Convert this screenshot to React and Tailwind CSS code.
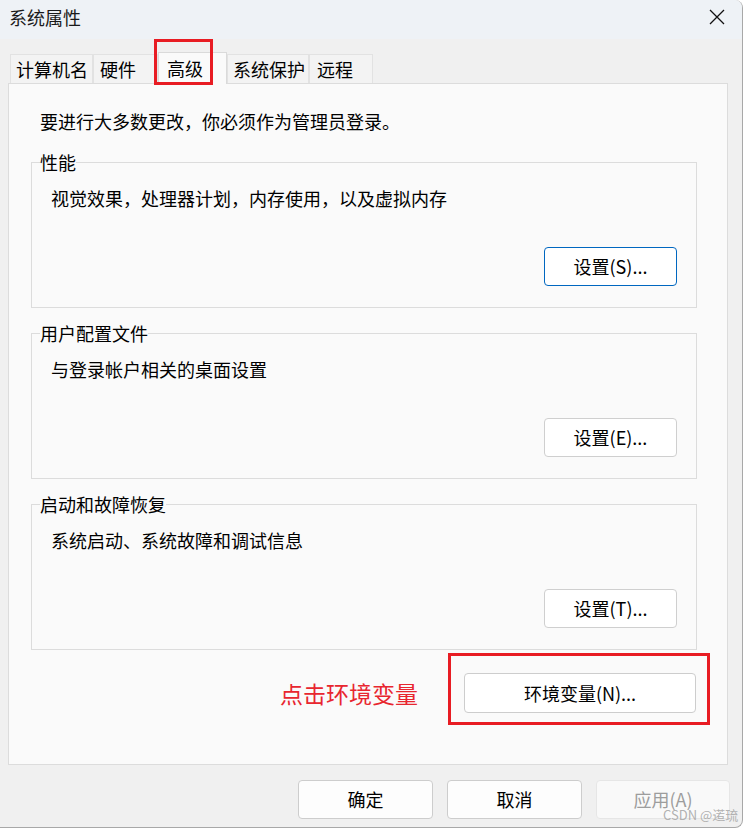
import React from "react";

const FONT = { fontFamily: '"Noto Sans CJK SC", "Noto Sans", sans-serif' };

function Group({ title, desc, btn, primary }) {
  return (
    <fieldset className="border border-[#dcdcdc] ml-[22px] mr-[30px] px-[8px] pb-[21px]">
      <legend className="px-0 text-[18px] leading-[24px] text-black">{title}</legend>
      <div className="pl-[11px] pt-[12px]">
        <div className="text-[18px] leading-[24px] text-black">{desc}</div>
        <div className="flex justify-end mt-[37px] pr-[11px]">
          <div
            className={
              "w-[133px] h-[39px] flex items-center justify-center rounded-[4px] bg-white text-[18px] text-black " +
              (primary ? "border border-[#0067c0]" : "border border-[#cfcfcf]")
            }
          >
            {btn}
          </div>
        </div>
      </div>
    </fieldset>
  );
}

function Tab({ label, w, selected, pl }) {
  if (selected) {
    return (
      <div
        className="h-[32px] -mb-[1px] bg-[#fafafa] border border-b-0 border-[#dadada] text-[18px] leading-[30px] text-black relative z-10"
        style={{ width: w, paddingLeft: pl }}
      >
        {label}
      </div>
    );
  }
  return (
    <div
      className="h-[29px] bg-[#f3f3f3] border border-b-0 border-[#e2e2e2] text-[18px] leading-[28px] text-black"
      style={{ width: w, paddingLeft: pl }}
    >
      {label}
    </div>
  );
}

export default function App() {
  return (
    <div className="w-[745px] h-[829px] bg-white overflow-hidden" style={FONT}>
      <div className="relative w-[743px] h-[828px] bg-[#f0f0f0] border-r border-b border-[#a8a8a8] rounded-tr-[8px] rounded-br-[8px] overflow-hidden flex flex-col">
        {/* title bar */}
        <div className="h-[39px] bg-[#eef2f6] flex items-start justify-between shrink-0">
          <div className="pl-[9px] pt-[5px] text-[18px] leading-[24px] text-[#1a1a1a]">系统属性</div>
          <svg className="mt-[9px] mr-[17px]" width="16" height="16" viewBox="0 0 16 16">
            <path d="M1 1 L15 15 M15 1 L1 15" stroke="#111" strokeWidth="1.3" fill="none" />
          </svg>
        </div>

        {/* tabs */}
        <div className="flex items-end pl-[10px] mt-[12px] h-[32px] shrink-0">
          <Tab label="计算机名" w={83} pl={5} />
          <Tab label="硬件" w={65} pl={6} />
          <Tab label="高级" selected w={69} pl={8} />
          <Tab label="系统保护" w={82} pl={5} />
          <Tab label="远程" w={64} pl={7} />
        </div>

        {/* panel */}
        <div className="ml-[8px] w-[720px] h-[682px] bg-[#fafafa] border border-[#dcdcdc] flex flex-col pt-[25px] shrink-0">
          <div className="pl-[31px] text-[18px] leading-[24px] text-black">
            要进行大多数更改，你必须作为管理员登录。
          </div>
          <div className="mt-[17px] flex flex-col gap-[13px]">
            <Group title="性能" desc="视觉效果，处理器计划，内存使用，以及虚拟内存" btn="设置(S)..." primary />
            <Group title="用户配置文件" desc="与登录帐户相关的桌面设置" btn="设置(E)..." />
            <Group title="启动和故障恢复" desc="系统启动、系统故障和调试信息" btn="设置(T)..." />
          </div>
          <div className="mt-[23px] flex items-center justify-end mr-[31px]">
            <div className="text-[23px] leading-[30px] text-[#e8262f] mr-[46px]">点击环境变量</div>
            <div className="w-[232px] h-[40px] flex items-center justify-center rounded-[4px] bg-white border border-[#cdcdcd] text-[18px] text-black">
              环境变量(N)...
            </div>
          </div>
        </div>

        {/* bottom buttons */}
        <div className="flex justify-end gap-[14px] mt-[15px] mr-[12px]">
          <div className="w-[135px] h-[39px] flex items-center justify-center rounded-[4px] bg-[#fdfdfd] border border-[#cdcdcd] text-[18px] text-black">
            确定
          </div>
          <div className="w-[135px] h-[39px] flex items-center justify-center rounded-[4px] bg-[#fdfdfd] border border-[#cdcdcd] text-[18px] text-black">
            取消
          </div>
          <div className="w-[134px] h-[39px] flex items-center justify-center rounded-[4px] bg-[#f9f9f9] border border-[#e6e6e6] text-[18px] text-[#9d9d9d]">
            应用(A)
          </div>
        </div>

        {/* annotations */}
        <div className="absolute left-[154px] top-[39px] w-[59px] h-[46px] border-[3px] border-[#e81c23] z-20" />
        <div className="absolute left-[448px] top-[653px] w-[262px] h-[72px] border-[3px] border-[#e81c23] z-20" />
        <div className="absolute left-[663px] top-[806px] text-[13px] leading-[18px] text-[#a8a8a8]/90 z-20">
          CSDN @逽琉
        </div>
      </div>
    </div>
  );
}
